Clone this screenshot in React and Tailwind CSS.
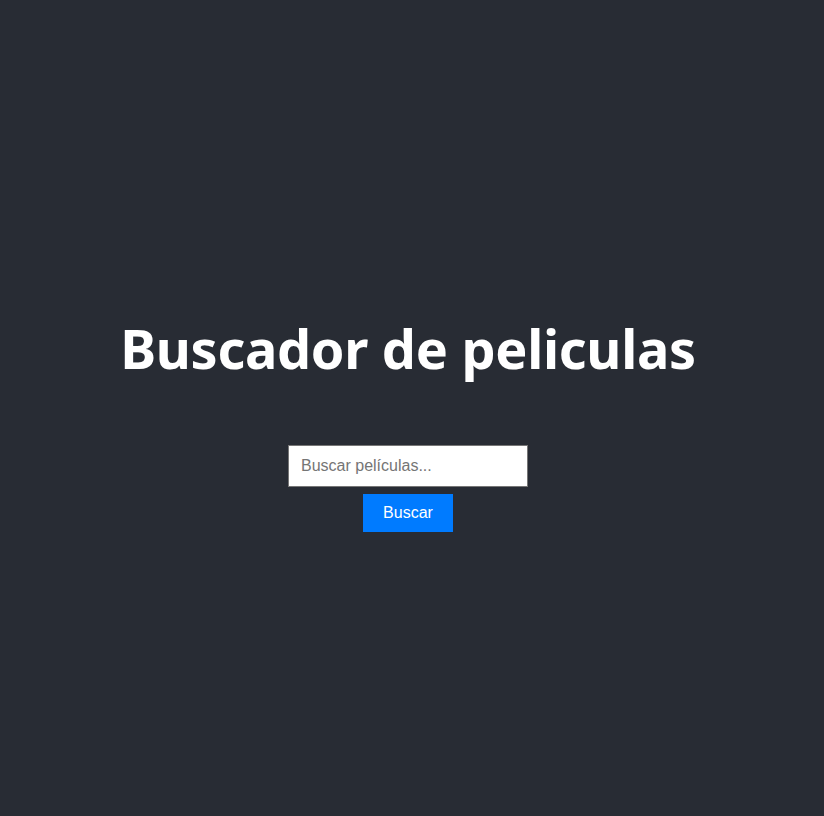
import React, { useState } from 'react';

const App = () => {
  const [query, setQuery] = useState('');

  return (
    <div className="min-h-screen bg-[#282c34] flex flex-col items-center justify-center pt-[32px] pr-2 text-white">
      <h1 className="text-[54px] font-bold leading-[1.2] font-['Noto_Sans',sans-serif] tracking-[-0.3px]">
        Buscador de peliculas
      </h1>
      <form
        className="mt-[64px] flex flex-col items-center gap-[7px] font-['Liberation_Sans',Arial,sans-serif]"
        onSubmit={(e) => e.preventDefault()}
      >
        <input
          type="text"
          value={query}
          onChange={(e) => setQuery(e.target.value)}
          placeholder="Buscar películas..."
          className="w-[240px] h-[42px] px-3 bg-white text-black text-base border border-[#767676] outline-none placeholder:text-[#757575]"
        />
        <button
          type="submit"
          className="w-[90px] h-[38px] bg-[#007bff] text-white text-base"
        >
          Buscar
        </button>
      </form>
    </div>
  );
};

export default App;
